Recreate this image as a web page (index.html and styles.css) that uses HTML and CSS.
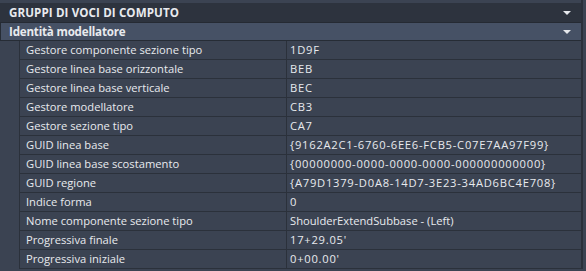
FILE: index.html
```html
<!DOCTYPE html>
<html>
<head>
<meta charset="utf-8">
<link rel="stylesheet" href="styles.css">
</head>
<body>
<div class="panel">
  <div class="cat">
    <span class="cat-title">GRUPPI DI VOCI DI COMPUTO</span>
    <span class="arrow"></span>
  </div>
  <div class="group">
    <span class="group-title">Identità modellatore</span>
    <span class="arrow"></span>
  </div>
  <div class="rows">
    <div class="row"><div class="indent"></div><div class="name">Gestore componente sezione tipo</div><div class="value num">1D9F</div></div>
    <div class="row"><div class="indent"></div><div class="name">Gestore linea base orizzontale</div><div class="value num">BEB</div></div>
    <div class="row"><div class="indent"></div><div class="name">Gestore linea base verticale</div><div class="value num">BEC</div></div>
    <div class="row"><div class="indent"></div><div class="name">Gestore modellatore</div><div class="value num">CB3</div></div>
    <div class="row"><div class="indent"></div><div class="name">Gestore sezione tipo</div><div class="value num">CA7</div></div>
    <div class="row"><div class="indent"></div><div class="name">GUID linea base</div><div class="value num">{9162A2C1-6760-6EE6-FCB5-C07E7AA97F99}</div></div>
    <div class="row"><div class="indent"></div><div class="name">GUID linea base scostamento</div><div class="value num">{00000000-0000-0000-0000-000000000000}</div></div>
    <div class="row"><div class="indent"></div><div class="name">GUID regione</div><div class="value num">{A79D1379-D0A8-14D7-3E23-34AD6BC4E708}</div></div>
    <div class="row"><div class="indent"></div><div class="name">Indice forma</div><div class="value num">0</div></div>
    <div class="row"><div class="indent"></div><div class="name">Nome componente sezione tipo</div><div class="value">ShoulderExtendSubbase - (Left)</div></div>
    <div class="row"><div class="indent"></div><div class="name">Progressiva finale</div><div class="value num">17+29.05'</div></div>
    <div class="row"><div class="indent"></div><div class="name">Progressiva iniziale</div><div class="value num">0+00.00'</div></div>
  </div>
</div>
</body>
</html>
```
FILE: styles.css
```css
* {
  box-sizing: border-box;
}
html, body {
  margin: 0;
  padding: 0;
  background: #3b4352;
}
body {
  width: 586px;
  height: 271px;
  overflow: hidden;
  font-family: "Open Sans", "Noto Sans", sans-serif;
  font-size: 11.2px;
  color: #e8eaee;
}
.panel {
  padding-top: 3px;
  width: 583px;
  border-right: 2px solid #2a303a;
}
.cat {
  height: 20px;
  background: #2d333e;
  border-bottom: 1px solid #252a33;
  display: flex;
  align-items: center;
  justify-content: space-between;
  padding-left: 9px;
  padding-right: 10px;
}
.cat-title, .group-title {
  font-weight: bold;
  font-size: 11.6px;
}
.cat-title {
  letter-spacing: 0.1px;
}
.group-title {
  letter-spacing: -0.2px;
}
.group {
  height: 18px;
  background: #465165;
  border-bottom: 1px solid #262c35;
  border-left: 1px solid #262c35;
  display: flex;
  align-items: center;
  justify-content: space-between;
  padding-left: 8px;
  padding-right: 10px;
}
.arrow {
  width: 0;
  height: 0;
  border-left: 4px solid transparent;
  border-right: 4px solid transparent;
  border-top: 4px solid #e6e8ec;
}
.row {
  display: flex;
  height: 19px;
}
.indent {
  width: 20px;
  flex: none;
  background: #3b4352;
  border-right: 1px solid #2b313b;
}
.name, .value {
  height: 19px;
  border-bottom: 1px solid #2b313b;
  line-height: 18px;
  white-space: nowrap;
  overflow: hidden;
}
.name {
  width: 267px;
  flex: none;
  padding-left: 6px;
  border-right: 1px solid #2b313b;
}
.value {
  flex: 1;
  padding-left: 3px;
}
.num {
  letter-spacing: 0.75px;
}
```
